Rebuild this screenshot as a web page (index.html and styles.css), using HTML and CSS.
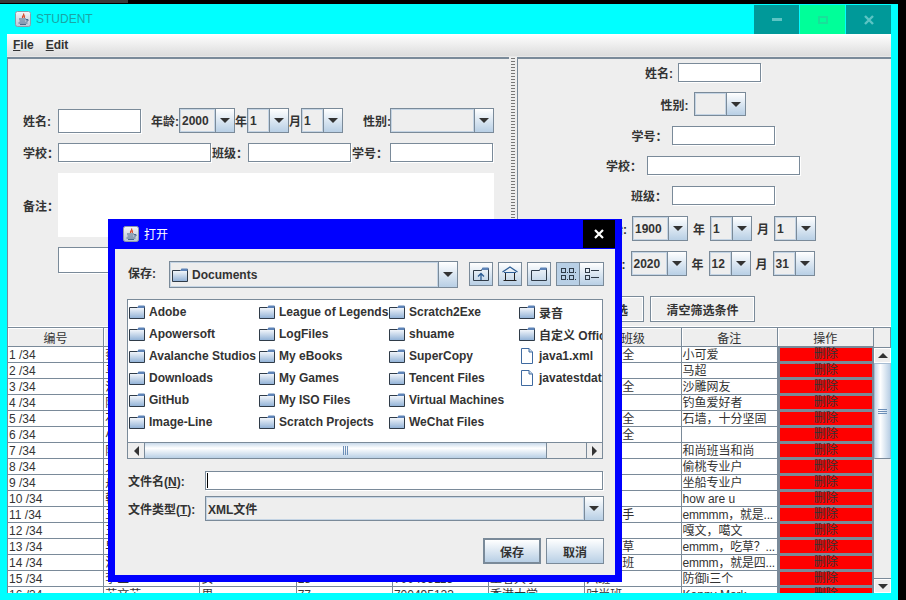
FILE: index.html
```html
<!DOCTYPE html>
<html lang="zh-CN">
<head>
    <meta charset="UTF-8">
    <meta name="viewport" content="width=device-width, initial-scale=1.0">
    <title>STUDENT</title>
    <link rel="stylesheet" href="styles.css">
</head>
<body>
    <svg class="icon-defs" width="0" height="0">
        <defs>
            <linearGradient id="g-java" x1="0" y1="0" x2="0" y2="1">
                <stop offset="0" stop-color="#f4f6f9"/><stop offset="1" stop-color="#b9c6d4"/>
            </linearGradient>
            <linearGradient id="g-folder" x1="0" y1="0" x2="0" y2="1">
                <stop offset="0" stop-color="#ffffff"/><stop offset="1" stop-color="#8fb0d6"/>
            </linearGradient>
            <symbol id="i-java" viewBox="0 0 16 16">
                <rect x="0.5" y="0.5" width="15" height="15" rx="2" fill="url(#g-java)" stroke="#8d9aa8"/>
                <path d="M8.5 2.5c1.5 1.5-2.2 2.6-.8 4.5M10 4.5c-1.5.8-1 1.5-.5 2.5" fill="none" stroke="#d8431f" stroke-width="1.2"/>
                <path d="M4 8h7M4.5 10h6M3.5 12h9M5 13.5h6" stroke="#4a6a8c"/>
                <path d="M11 8.5h2v1.5h-2" fill="none" stroke="#4a6a8c"/>
            </symbol>
            <symbol id="i-folder" viewBox="0 0 16 16">
                <path d="M.5 3.5L8.5 3.5L9.5 2.5H15.5V14.5H.5Z" fill="url(#g-folder)" stroke="#2f3b48"/>
                <path d="M9.5 1.5H15.5V4H8Z" fill="#5d83b8"/>
            </symbol>
            <symbol id="i-file" viewBox="0 0 16 16">
                <path d="M2.5.5H10L13.5 4V15.5H2.5Z" fill="#fff" stroke="#3f6aa0"/>
                <path d="M10 .5V4H13.5" fill="#c9d9ea" stroke="#3f6aa0"/>
            </symbol>
            <symbol id="i-up" viewBox="0 0 16 16">
                <path d="M.5 4.5L8.5 4.5L9.5 2.5H15.5V14.5H.5Z" fill="none" stroke="#2f3b48"/>
                <path d="M9.5 1.5H15.5V4H8.5Z" fill="#5d83b8"/>
                <path d="M8 14V8M5 10.5L8 7.5L11 10.5" fill="none" stroke="#2c5c94" stroke-width="1.3"/>
            </symbol>
            <symbol id="i-home" viewBox="0 0 16 16">
                <path d="M.5 6L8 1L15.5 6" fill="none" stroke="#2c5c94" stroke-width="1.2"/>
                <path d="M2 6.5H14" stroke="#2c5c94"/>
                <path d="M3.5 7V14.5H12.5V7" fill="none" stroke="#222"/>
                <path d="M1.5 14.5H14.5" stroke="#222"/>
            </symbol>
            <symbol id="i-newfolder" viewBox="0 0 16 16">
                <path d="M.5 4.5L8.5 4.5L9.5 2.5H15.5V14.5H.5Z" fill="none" stroke="#2f3b48"/>
                <path d="M9.5 1.5H15.5V4H8.5Z" fill="#5d83b8"/>
            </symbol>
            <symbol id="i-grid" viewBox="0 0 16 16" fill="none" stroke="#2f3b48">
                <rect x="1.5" y="2.5" width="4" height="4"/><rect x="9.5" y="2.5" width="4" height="4"/>
                <rect x="1.5" y="9.5" width="4" height="4"/><rect x="9.5" y="9.5" width="4" height="4"/>
                <path d="M7 6.5h1M15 6.5h1M7 13.5h1M15 13.5h1"/>
            </symbol>
            <symbol id="i-list" viewBox="0 0 16 16" fill="none" stroke="#2f3b48">
                <rect x="1.5" y="2.5" width="4" height="4"/><rect x="1.5" y="9.5" width="4" height="4"/>
                <path d="M7 4.5h8M7 11.5h8"/>
            </symbol>
        </defs>
    </svg>

    <div class="desk-edge"></div>

    <!-- main window -->
    <div class="window-main">
        <div class="title-bar">
            <svg class="app-icon"><use href="#i-java"/></svg>
            <span class="title-text">STUDENT</span>
            <div class="win-buttons">
                <div class="win-btn"><span class="min-glyph"></span></div>
                <div class="win-btn win-btn-hover"><span class="max-glyph"></span></div>
                <div class="win-btn">
                    <svg class="close-glyph" viewBox="0 0 10 10"><path d="M1 1L9 9M9 1L1 9"/></svg>
                </div>
            </div>
        </div>

        <div class="menu-bar">
            <span class="menu-item"><u>F</u>ile</span>
            <span class="menu-item"><u>E</u>dit</span>
        </div>

        <div class="split">
            <div class="panel-left">
                <div class="form-row">
                    <label class="lab w35">姓名:</label>
                    <input class="field w83 h24" type="text">
                    <label class="lab w28 ml10">年龄:</label>
                    <div class="combo w56"><span class="combo-value">2000</span><span class="combo-arrow"></span></div>
                    <label class="lab w12">年</label>
                    <div class="combo w42"><span class="combo-value">1</span><span class="combo-arrow"></span></div>
                    <label class="lab w12">月</label>
                    <div class="combo w42"><span class="combo-value">1</span><span class="combo-arrow"></span></div>
                    <label class="lab w27 ml20">性别:</label>
                    <div class="combo w104"><span class="combo-value"></span><span class="combo-arrow"></span></div>
                </div>
                <div class="form-row">
                    <label class="lab w35">学校：</label>
                    <input class="field w153" type="text">
                    <label class="lab w36 ml1">班级：</label>
                    <input class="field w103" type="text">
                    <label class="lab w38 ml1">学号：</label>
                    <input class="field w103" type="text">
                </div>
                <div class="form-row mt1">
                    <label class="lab w35">备注：</label>
                    <div class="note-area"></div>
                </div>
                <div class="form-row">
                    <span class="lab w35"></span>
                    <input class="field w153 h26" type="text">
                </div>
            </div>

            <div class="split-bar"></div>

            <div class="panel-right">
                <div class="filter-row">
                    <label class="lab">姓名:</label>
                    <input class="field w83" type="text">
                </div>
                <div class="filter-row">
                    <label class="lab">性别:</label>
                    <div class="combo w52 h24"><span class="combo-value"></span><span class="combo-arrow"></span></div>
                </div>
                <div class="filter-row">
                    <label class="lab w35">学号：</label>
                    <input class="field w103" type="text">
                </div>
                <div class="filter-row mt1">
                    <label class="lab w36">学校：</label>
                    <input class="field w153" type="text">
                </div>
                <div class="filter-row mt1">
                    <label class="lab w36">班级：</label>
                    <input class="field w103" type="text">
                </div>
                <div class="filter-row mt1">
                    <label class="lab w37 right">开始:</label>
                    <div class="combo w56"><span class="combo-value">1900</span><span class="combo-arrow"></span></div>
                    <label class="lab w12">年</label>
                    <div class="combo w42"><span class="combo-value">1</span><span class="combo-arrow"></span></div>
                    <label class="lab w12">月</label>
                    <div class="combo w42"><span class="combo-value">1</span><span class="combo-arrow"></span></div>
                </div>
                <div class="filter-row">
                    <label class="lab w34 right">结束:</label>
                    <div class="combo w56"><span class="combo-value">2020</span><span class="combo-arrow"></span></div>
                    <label class="lab w12">年</label>
                    <div class="combo w42"><span class="combo-value">12</span><span class="combo-arrow"></span></div>
                    <label class="lab w12">月</label>
                    <div class="combo w42"><span class="combo-value">31</span><span class="combo-arrow"></span></div>
                </div>
                <div class="filter-buttons">
                    <button class="flat-btn w80">开始筛选</button>
                    <button class="flat-btn w105">清空筛选条件</button>
                </div>
            </div>
        </div>

        <div class="table-area">
            <table class="stu-table">
                <thead>
                    <tr><th>编号</th><th>姓名</th><th>性别</th><th>年龄</th><th>学号</th><th>学校</th><th>班级</th><th>备注</th><th>操作</th></tr>
                </thead>
                <tbody>
                    <tr><td>1 /34</td><td>蔡文姬</td><td>女</td><td>12</td><td>700495101</td><td>王者大学</td><td>网络安全</td><td>小可爱</td><td class="del-cell"><div class="del-btn">删除</div></td></tr>
                    <tr><td>2 /34</td><td>马超</td><td>男</td><td>30</td><td>700495102</td><td>王者大学</td><td>一班</td><td>马超</td><td class="del-cell"><div class="del-btn">删除</div></td></tr>
                    <tr><td>3 /34</td><td>沙雕</td><td>男</td><td>21</td><td>700495103</td><td>王者大学</td><td>网络安全</td><td>沙雕网友</td><td class="del-cell"><div class="del-btn">删除</div></td></tr>
                    <tr><td>4 /34</td><td>阿钓</td><td>男</td><td>45</td><td>700495104</td><td>王者大学</td><td>二班</td><td>钓鱼爱好者</td><td class="del-cell"><div class="del-btn">删除</div></td></tr>
                    <tr><td>5 /34</td><td>石墙</td><td>男</td><td>33</td><td>700495105</td><td>王者大学</td><td>网络安全</td><td>石墙，十分坚固</td><td class="del-cell"><div class="del-btn">删除</div></td></tr>
                    <tr><td>6 /34</td><td>小乔</td><td>女</td><td>18</td><td>700495106</td><td>王者大学</td><td>网络安全</td><td></td><td class="del-cell"><div class="del-btn">删除</div></td></tr>
                    <tr><td>7 /34</td><td>阿和</td><td>男</td><td>40</td><td>700495107</td><td>王者大学</td><td>三班</td><td>和尚班当和尚</td><td class="del-cell"><div class="del-btn">删除</div></td></tr>
                    <tr><td>8 /34</td><td>大圣</td><td>男</td><td>50</td><td>700495108</td><td>王者大学</td><td>三班</td><td>偷桃专业户</td><td class="del-cell"><div class="del-btn">删除</div></td></tr>
                    <tr><td>9 /34</td><td>舟子</td><td>男</td><td>26</td><td>700495109</td><td>王者大学</td><td>四班</td><td>坐船专业户</td><td class="del-cell"><div class="del-btn">删除</div></td></tr>
                    <tr><td>10 /34</td><td>韩雪</td><td>女</td><td>19</td><td>700495110</td><td>王者大学</td><td>四班</td><td>how are u</td><td class="del-cell"><div class="del-btn">删除</div></td></tr>
                    <tr><td>11 /34</td><td>王明</td><td>男</td><td>22</td><td>700495111</td><td>王者大学</td><td>神枪射手</td><td class="tight">emmmm，就是...</td><td class="del-cell"><div class="del-btn">删除</div></td></tr>
                    <tr><td>12 /34</td><td>王文</td><td>男</td><td>24</td><td>700495112</td><td>王者大学</td><td>五班</td><td>嘎文，噶文</td><td class="del-cell"><div class="del-btn">删除</div></td></tr>
                    <tr><td>13 /34</td><td>早早</td><td>女</td><td>20</td><td>700495113</td><td>王者大学</td><td>专业吃草</td><td class="tight">emmm，吃草？...</td><td class="del-cell"><div class="del-btn">删除</div></td></tr>
                    <tr><td>14 /34</td><td>沈四</td><td>男</td><td>23</td><td>700495114</td><td>王者大学</td><td>三年四班</td><td class="tight">emmm，就是四...</td><td class="del-cell"><div class="del-btn">删除</div></td></tr>
                    <tr><td>15 /34</td><td>李三</td><td>女</td><td>28</td><td>700495115</td><td>王者大学</td><td>六班</td><td>防御i三个</td><td class="del-cell"><div class="del-btn">删除</div></td></tr>
                    <tr><td>16 /34</td><td>苏文苏</td><td>男</td><td>77</td><td>700495123</td><td>香港大学</td><td>时尚班</td><td>Kenny Mark</td><td class="del-cell"><div class="del-btn">删除</div></td></tr>
                </tbody>
            </table>
            <div class="table-scroll">
                <div class="table-corner"></div>
                <div class="sb-btn sb-up"></div>
                <div class="sb-thumb"><span class="sb-grip"></span></div>
                <div class="sb-track"></div>
                <div class="sb-btn sb-down"></div>
            </div>
        </div>
    </div>

    <!-- save dialog -->
    <div class="dialog">
        <div class="dialog-title">
            <svg class="app-icon"><use href="#i-java"/></svg>
            <span class="dialog-title-text">打开</span>
            <div class="dialog-close">
                <svg class="dialog-x" viewBox="0 0 10 10"><path d="M1 1L9 9M9 1L1 9"/></svg>
            </div>
        </div>
        <div class="dialog-body">
            <div class="look-row">
                <label class="lab">保存:</label>
                <div class="combo w289 h27">
                    <span class="combo-value with-icon"><svg class="list-icon"><use href="#i-folder"/></svg>Documents</span>
                    <span class="combo-arrow"></span>
                </div>
                <div class="tool-buttons">
                    <div class="tool-btn"><svg class="list-icon"><use href="#i-up"/></svg></div>
                    <div class="tool-btn"><svg class="list-icon"><use href="#i-home"/></svg></div>
                    <div class="tool-btn"><svg class="list-icon"><use href="#i-newfolder"/></svg></div>
                    <div class="tool-pair">
                        <div class="tool-btn tool-on"><svg class="list-icon"><use href="#i-grid"/></svg></div>
                        <div class="tool-btn"><svg class="list-icon"><use href="#i-list"/></svg></div>
                    </div>
                </div>
            </div>

            <div class="file-box">
                <div class="file-grid">
                    <div class="file-item"><svg class="list-icon"><use href="#i-folder"/></svg>Adobe</div>
                    <div class="file-item"><svg class="list-icon"><use href="#i-folder"/></svg>Apowersoft</div>
                    <div class="file-item"><svg class="list-icon"><use href="#i-folder"/></svg>Avalanche Studios</div>
                    <div class="file-item"><svg class="list-icon"><use href="#i-folder"/></svg>Downloads</div>
                    <div class="file-item"><svg class="list-icon"><use href="#i-folder"/></svg>GitHub</div>
                    <div class="file-item"><svg class="list-icon"><use href="#i-folder"/></svg>Image-Line</div>
                    <div class="file-item"><svg class="list-icon"><use href="#i-folder"/></svg>League of Legends</div>
                    <div class="file-item"><svg class="list-icon"><use href="#i-folder"/></svg>LogFiles</div>
                    <div class="file-item"><svg class="list-icon"><use href="#i-folder"/></svg>My eBooks</div>
                    <div class="file-item"><svg class="list-icon"><use href="#i-folder"/></svg>My Games</div>
                    <div class="file-item"><svg class="list-icon"><use href="#i-folder"/></svg>My ISO Files</div>
                    <div class="file-item"><svg class="list-icon"><use href="#i-folder"/></svg>Scratch Projects</div>
                    <div class="file-item"><svg class="list-icon"><use href="#i-folder"/></svg>Scratch2Exe</div>
                    <div class="file-item"><svg class="list-icon"><use href="#i-folder"/></svg>shuame</div>
                    <div class="file-item"><svg class="list-icon"><use href="#i-folder"/></svg>SuperCopy</div>
                    <div class="file-item"><svg class="list-icon"><use href="#i-folder"/></svg>Tencent Files</div>
                    <div class="file-item"><svg class="list-icon"><use href="#i-folder"/></svg>Virtual Machines</div>
                    <div class="file-item"><svg class="list-icon"><use href="#i-folder"/></svg>WeChat Files</div>
                    <div class="file-item"><svg class="list-icon"><use href="#i-folder"/></svg>录音</div>
                    <div class="file-item"><svg class="list-icon"><use href="#i-folder"/></svg>自定义 Office 模板</div>
                    <div class="file-item"><svg class="list-icon"><use href="#i-file"/></svg>java1.xml</div>
                    <div class="file-item"><svg class="list-icon"><use href="#i-file"/></svg>javatestdata.xml</div>
                </div>
                <div class="h-scroll">
                    <div class="hs-btn hs-left"></div>
                    <div class="hs-thumb"><span class="hs-grip"></span></div>
                    <div class="hs-track"></div>
                    <div class="hs-btn hs-right"></div>
                </div>
            </div>

            <div class="name-row">
                <label class="lab w77">文件名(<u>N</u>):</label>
                <div class="name-field"><span class="caret"></span></div>
            </div>
            <div class="type-row">
                <label class="lab w77">文件类型(<u>T</u>):</label>
                <div class="combo w399"><span class="combo-value">XML文件</span><span class="combo-arrow"></span></div>
            </div>
            <div class="dialog-buttons">
                <button class="grad-btn grad-default">保存</button>
                <button class="grad-btn">取消</button>
            </div>
        </div>
    </div>
</body>
</html>
```

FILE: styles.css
```css
* {
    box-sizing: border-box;
}

body {
    margin: 0;
    width: 906px;
    height: 600px;
    overflow: hidden;
    position: relative;
    background-color: #000;
    font-family: "Liberation Sans", "Noto Sans CJK SC", sans-serif;
    font-size: 12px;
    color: #333;
}

.icon-defs {
    position: absolute;
}

.desk-edge {
    width: 128px;
    height: 3px;
    background-color: #3a3a3a;
}

/* main window */
.window-main {
    position: absolute;
    left: 0;
    top: 4px;
    width: 898px;
    height: 596px;
    padding: 0 7px 7px;
    background-color: #0ff;
    display: flex;
    flex-direction: column;
}

.title-bar {
    height: 30px;
    flex: none;
    display: flex;
    align-items: center;
    padding-left: 8px;
}

.app-icon {
    width: 16px;
    height: 16px;
    flex: none;
}

.title-text {
    margin-left: 5px;
    font-size: 12px;
    color: #1aa5a5;
}

.win-buttons {
    margin-left: auto;
    display: flex;
    gap: 1px;
    align-self: flex-end;
}

.win-btn {
    width: 45px;
    height: 29px;
    background-color: #009999;
    display: flex;
    align-items: center;
    justify-content: center;
}

.win-btn-hover {
    background-color: #00ff99;
}

.min-glyph {
    width: 10px;
    height: 3px;
    background-color: #5cc4c4;
}

.max-glyph {
    width: 10px;
    height: 8px;
    border: 2px solid #19e09a;
}

.close-glyph {
    width: 10px;
    height: 10px;
    fill: none;
    stroke: #5cc4c4;
    stroke-width: 2.4;
}

.menu-bar {
    height: 23px;
    flex: none;
    display: flex;
    gap: 12px;
    align-items: center;
    padding-left: 6px;
    font-weight: bold;
    background: linear-gradient(#fff, #dcdcdc);
    border-bottom: 1px solid #e8e8e8;
}

.split {
    height: 269px;
    flex: none;
    display: flex;
    background-color: #eee;
}

.panel-left {
    width: 502px;
    flex: none;
    padding: 49px 0 0 15px;
    border-top: 2px solid #7a8a99;
    border-left: 1px solid #7a8a99;
    display: flex;
    flex-direction: column;
    gap: 10px;
}

.split-bar {
    width: 8px;
    flex: none;
    padding: 0 2px;
    background-image: radial-gradient(circle, #777 0.7px, transparent 1px);
    background-size: 2px 3px;
    background-origin: content-box;
    background-clip: content-box;
}

.panel-right {
    flex: 1;
    padding: 4px 3px 0 0;
    border-top: 2px solid #7a8a99;
    border-left: 1px solid #7a8a99;
    display: flex;
    flex-direction: column;
    align-items: center;
    gap: 10px;
}

.form-row,
.filter-row {
    display: flex;
    align-items: center;
}

.filter-row .combo + .lab {
    margin: 0 5px;
}

.filter-row .lab:first-child {
    margin-right: 5px;
}

.filter-buttons {
    align-self: flex-end;
    margin: 10px 133px 0 0;
    display: flex;
    gap: 6px;
}

.lab {
    flex: none;
    font-weight: bold;
    white-space: nowrap;
}

.right {
    text-align: right;
}

.field {
    height: 19px;
    flex: none;
    padding: 0 2px;
    border: 1px solid #7a8a99;
    border-radius: 0;
    background-color: #fff;
    box-shadow: 1px 1px 0 #fff;
    outline: none;
}

.note-area {
    width: 436px;
    height: 64px;
    background-color: #fff;
}

.combo {
    height: 25px;
    flex: none;
    display: flex;
    border: 1px solid #7a8a99;
    background-color: #eee;
}

.combo-value {
    flex: 1;
    min-width: 0;
    padding-left: 2px;
    display: flex;
    align-items: center;
    font-weight: bold;
    box-shadow: inset 0 0 0 1px #c4d4e4;
}

.combo-value.with-icon {
    gap: 4px;
}

.combo-arrow {
    width: 19px;
    flex: none;
    border-left: 1px solid #7a8a99;
    background: linear-gradient(#fff, #b8cfe5);
    display: flex;
    align-items: center;
    justify-content: center;
}

.combo-arrow::after {
    content: "";
    border-style: solid;
    border-width: 5px 5px 0;
    border-color: #333 transparent transparent;
}

.flat-btn {
    height: 26px;
    padding: 0;
    font: inherit;
    font-weight: bold;
    color: #333;
    background-color: #eee;
    border: 1px solid #7a8a99;
    box-shadow: inset 0 0 0 1px #fff;
}

/* student table */
.table-area {
    flex: 1;
    min-height: 0;
    overflow: hidden;
    display: flex;
    border-left: 1px solid #7a8a99;
    background-color: #fff;
    padding-top: 1px;
}

.stu-table {
    width: 866px;
    flex: none;
    align-self: flex-start;
    table-layout: fixed;
    border-collapse: separate;
    border-spacing: 0;
}

.stu-table th {
    height: 20px;
    padding: 4px 0 0;
    font-weight: normal;
    background-color: #eee;
    border-top: 1px solid #7a8a99;
    border-right: 1px solid #7a8a99;
    border-bottom: 1px solid #7a8a99;
    box-shadow: inset 1px 1px 0 #fff;
    line-height: 14px;
}

.stu-table td {
    height: 16px;
    padding: 1px 0 0 1px;
    line-height: 14px;
    border-right: 1px solid #7a8a99;
    border-bottom: 1px solid #7a8a99;
    white-space: nowrap;
    overflow: hidden;
}

.stu-table td.tight {
    letter-spacing: -0.2px;
}

.stu-table td.del-cell {
    padding: 1px 1px 1px 2px;
    background-color: #7a8a99;
}

.del-btn {
    height: 13px;
    line-height: 13px;
    text-align: center;
    background-color: #f00;
}

.table-scroll {
    flex: 1;
    display: flex;
    flex-direction: column;
    background-color: #eee;
}

.table-corner {
    height: 21px;
    flex: none;
    border-top: 1px solid #7a8a99;
    border-bottom: 1px solid #7a8a99;
    border-right: 1px solid #7a8a99;
}

.sb-btn {
    height: 15px;
    flex: none;
    display: flex;
    align-items: center;
    justify-content: center;
    background-color: #eee;
    box-shadow: inset 0 0 0 1px #fff;
}

.sb-up::after {
    content: "";
    border-style: solid;
    border-width: 0 5px 5px;
    border-color: transparent transparent #333;
}

.sb-down {
    border-top: 1px solid #7a8a99;
}

.sb-down::after {
    content: "";
    border-style: solid;
    border-width: 5px 5px 0;
    border-color: #333 transparent transparent;
}

.sb-thumb {
    height: 96px;
    flex: none;
    display: flex;
    align-items: center;
    justify-content: center;
    background: linear-gradient(90deg, #c8d9ea, #fff 35%, #b8cfe5);
    border: 1px solid #a8bdd3;
    border-bottom-color: #7a8a99;
}

.sb-grip {
    width: 9px;
    height: 5px;
    border-top: 1px solid #6d8fb8;
    border-bottom: 1px solid #6d8fb8;
    background: linear-gradient(#6d8fb8, #6d8fb8) center / 100% 1px no-repeat;
}

.sb-track {
    flex: 1;
}

/* save dialog */
.dialog {
    position: absolute;
    left: 108px;
    top: 219px;
    width: 514px;
    height: 363px;
    padding: 0 7px 7px;
    background-color: #00f;
    display: flex;
    flex-direction: column;
}

.dialog-title {
    height: 30px;
    flex: none;
    display: flex;
    align-items: center;
    padding-left: 8px;
    color: #fff;
}

.dialog-title-text {
    margin: -2px 0 0 5px;
}

.dialog-close {
    margin: 1px 0 1px auto;
    width: 32px;
    height: 28px;
    background-color: #000;
    display: flex;
    align-items: center;
    justify-content: center;
}

.dialog-x {
    width: 10px;
    height: 10px;
    fill: none;
    stroke: #fff;
    stroke-width: 2.2;
}

.dialog-body {
    flex: 1;
    min-height: 0;
    padding: 12px 11px 0 12px;
    background-color: #eee;
}

.look-row {
    display: flex;
    align-items: flex-start;
    padding-left: 1px;
}

.look-row .lab {
    width: 41px;
    line-height: 27px;
}

.tool-buttons {
    margin: 1px 0 0 11px;
    display: flex;
    gap: 5px;
}

.tool-pair {
    display: flex;
}

.tool-pair .tool-btn + .tool-btn {
    border-left: none;
}

.tool-btn {
    width: 24px;
    height: 24px;
    display: flex;
    align-items: center;
    justify-content: center;
    border: 1px solid #7a8a99;
    background: linear-gradient(#fff, #b8cfe5);
}

.tool-btn.tool-on {
    background: #b8cfe5;
}

.list-icon {
    width: 16px;
    height: 16px;
    flex: none;
}

.file-box {
    position: relative;
    width: 476px;
    height: 160px;
    margin-top: 11px;
    padding: 1px 0 0 1px;
    border: 1px solid #7a8a99;
    background-color: #fff;
    overflow: hidden;
}

.file-grid {
    display: grid;
    grid-template-rows: repeat(6, 22px);
    grid-auto-flow: column;
    grid-auto-columns: 130px;
}

.file-item {
    display: flex;
    align-items: center;
    gap: 4px;
    font-weight: bold;
    white-space: nowrap;
}

.h-scroll {
    position: absolute;
    left: 0;
    right: 0;
    bottom: 0;
    height: 16px;
    display: flex;
    background-color: #eee;
    border-top: 1px solid #7a8a99;
}

.hs-btn {
    width: 16px;
    flex: none;
    display: flex;
    align-items: center;
    justify-content: center;
}

.hs-left::after {
    content: "";
    border-style: solid;
    border-width: 5px 5px 5px 0;
    border-color: transparent #333 transparent transparent;
}

.hs-right {
    border-left: 1px solid #7a8a99;
}

.hs-right::after {
    content: "";
    border-style: solid;
    border-width: 5px 0 5px 5px;
    border-color: transparent transparent transparent #333;
}

.hs-thumb {
    width: 403px;
    flex: none;
    display: flex;
    align-items: center;
    justify-content: center;
    background: linear-gradient(#c8d9ea, #fff 35%, #b8cfe5);
    border-left: 1px solid #7a8a99;
    border-right: 1px solid #7a8a99;
}

.hs-grip {
    width: 5px;
    height: 9px;
    border-left: 1px solid #6d8fb8;
    border-right: 1px solid #6d8fb8;
    background: linear-gradient(#6d8fb8, #6d8fb8) center / 1px 100% no-repeat;
}

.hs-track {
    flex: 1;
}

.name-row,
.type-row {
    display: flex;
    align-items: center;
    padding-left: 1px;
}

.name-row {
    margin-top: 12px;
}

.type-row {
    margin-top: 6px;
}

.name-field {
    width: 398px;
    height: 19px;
    padding-left: 1px;
    display: flex;
    align-items: center;
    background-color: #fff;
    border: 1px solid #7a8a99;
    box-shadow: 1px 1px 0 #fff;
}

.caret {
    width: 1px;
    height: 15px;
    background-color: #000;
}

.dialog-buttons {
    margin-top: 17px;
    display: flex;
    justify-content: flex-end;
    gap: 5px;
}

.grad-btn {
    width: 58px;
    height: 26px;
    padding: 0;
    font: inherit;
    font-weight: bold;
    color: #333;
    border: 1px solid #7a8a99;
    background: linear-gradient(#fff, #b8cfe5);
}

.grad-default {
    border-width: 2px;
}

/* sizes shared by fields and labels */
.w12 { width: 12px; }
.w27 { width: 27px; }
.w28 { width: 28px; }
.w34 { width: 34px; }
.w35 { width: 35px; }
.w36 { width: 36px; }
.w37 { width: 37px; }
.w38 { width: 38px; }
.w42 { width: 42px; }
.w52 { width: 52px; }
.w56 { width: 56px; }
.w77 { width: 77px; }
.w80 { width: 80px; }
.w83 { width: 83px; }
.w103 { width: 103px; }
.w104 { width: 104px; }
.w105 { width: 105px; }
.w153 { width: 153px; }
.w289 { width: 289px; }
.w399 { width: 399px; }
.h24 { height: 24px; }
.h26 { height: 26px; }
.h27 { height: 27px; }
.ml1 { margin-left: 1px; }
.ml10 { margin-left: 10px; }
.ml20 { margin-left: 20px; }
.mt1 { margin-top: 1px; }
```
